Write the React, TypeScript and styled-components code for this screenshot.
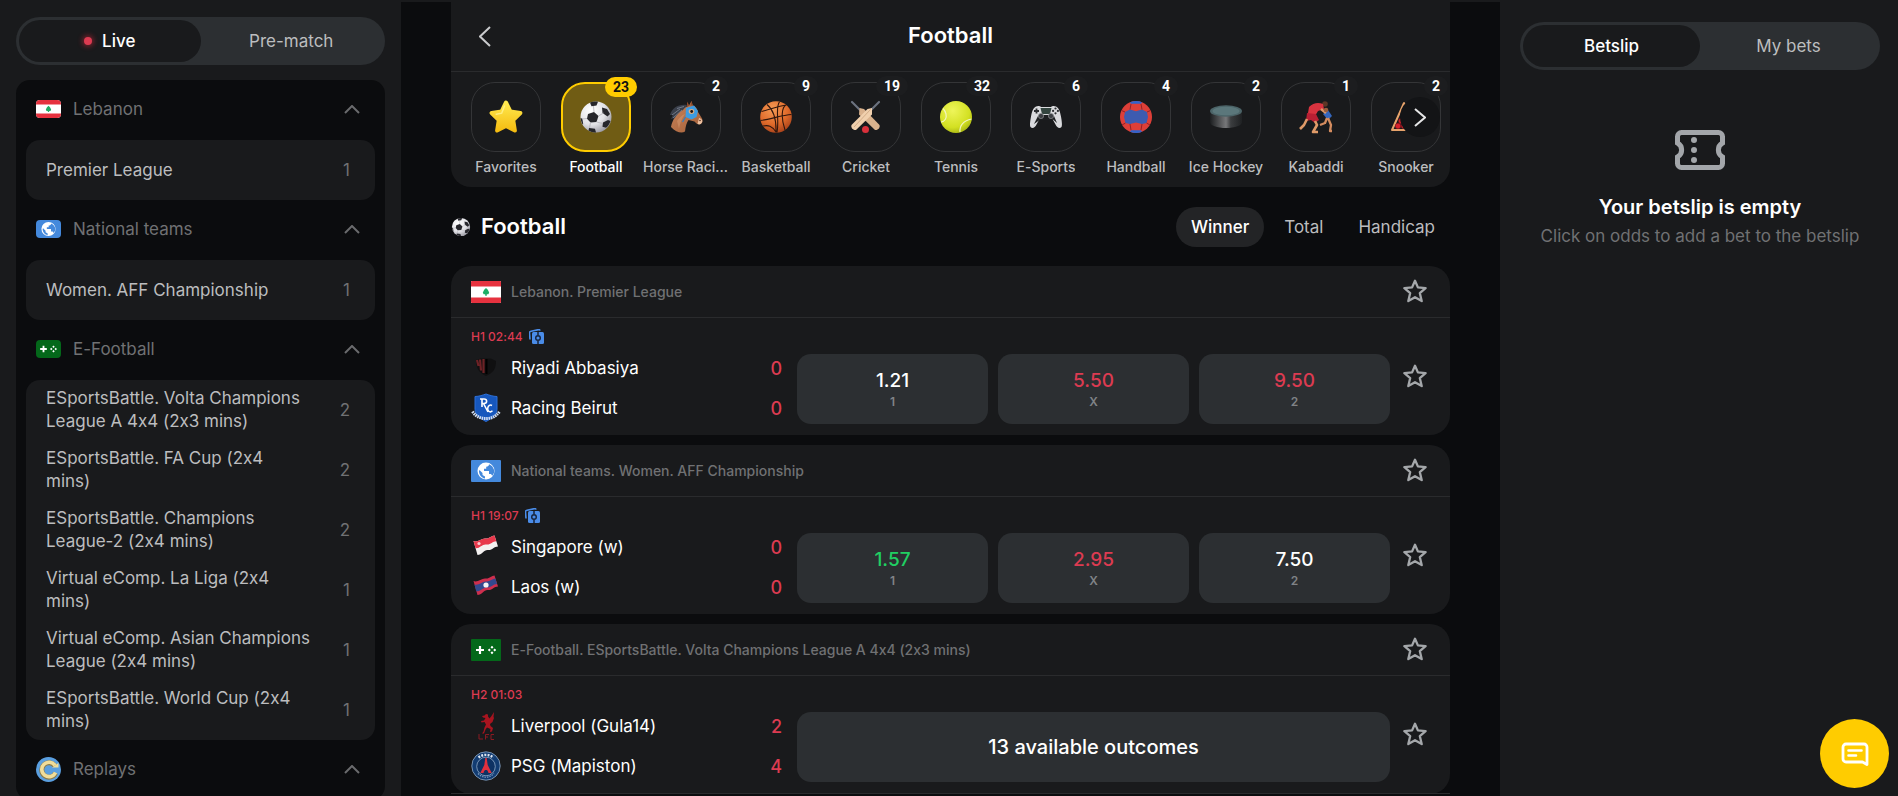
import React from 'react';
import styled, { createGlobalStyle, css } from 'styled-components';

const color = {
  base: '#0b0c0e',
  panel: '#191a1c',
  control: '#2c2f32',
  line: '#2a2b2d',
  text: '#ffffff',
  soft: '#bcbdbf',
  muted: '#707173',
  red: '#dc3b51',
  green: '#20cf62',
  yellow: '#ffcc00',
};

const GlobalStyle = createGlobalStyle`
  *, *::before, *::after { box-sizing: border-box; }
  body {
    margin: 0;
    background: ${color.base};
    color: ${color.text};
    font-family: Inter, "Liberation Sans", sans-serif;
    font-size: 17px;
    line-height: 23px;
    font-variant-ligatures: no-contextual;
  }
  button { font: inherit; font-variant-ligatures: inherit; color: inherit; border: 0; padding: 0; background: none; cursor: pointer; }
  a { color: inherit; text-decoration: none; }
  h1, h2, p, ul { margin: 0; padding: 0; }
  ul { list-style: none; }
  svg { display: block; flex: none; }
`;

/* ---------- page frame ---------- */

const Page = styled.div`
  display: flex;
  height: 100vh;
  overflow: hidden;
  border-top: 2px solid ${color.panel};
`;

const LeftBar = styled.aside`
  flex: 0 0 401px;
  padding: 15px 16px 0;
  background: ${color.panel};
  overflow: hidden;
`;

const Center = styled.main`
  flex: 1;
  min-width: 0;
  padding: 0 50px;
  overflow: hidden;
`;

const RightBar = styled.aside`
  flex: 0 0 398px;
  padding: 20px 18px 0 20px;
  background: ${color.panel};
  overflow: hidden;
`;

/* ---------- segmented switch ---------- */

const Segmented = styled.div`
  display: flex;
  height: 48px;
  padding: 3px;
  border-radius: 24px;
  background: ${color.control};
`;

const Segment = styled.button<{ $active?: boolean }>`
  flex: 1;
  display: flex;
  align-items: center;
  justify-content: center;
  gap: 10px;
  border-radius: 21px;
  color: ${p => (p.$active ? color.text : color.soft)};
  background: ${p => (p.$active ? color.panel : 'transparent')};
  font-weight: ${p => (p.$active ? 500 : 400)};
`;

const LiveDot = styled.span`
  width: 8px;
  height: 8px;
  border-radius: 50%;
  background: ${color.red};
  box-shadow: 0 0 5px 2px rgba(220, 40, 60, 0.45);
`;

/* ---------- league list ---------- */

const LeaguePanel = styled.nav`
  margin-top: 15px;
  padding: 0 10px;
  border-radius: 14px;
  background: ${color.base};
`;

const GroupHead = styled.button`
  display: flex;
  align-items: center;
  gap: 12px;
  width: 100%;
  height: 60px;
  padding: 0 15px 2px 10px;
  color: ${color.muted};
  text-align: left;
`;

const GroupName = styled.span`
  flex: 1;
`;

const LeagueList = styled.ul`
  border-radius: 14px;
  background: ${color.panel};
`;

const LeagueLink = styled.a`
  display: flex;
  align-items: center;
  justify-content: space-between;
  height: 60px;
  padding: 0 25px 0 20px;
  color: ${color.soft};
`;

const LeagueName = styled.span`
  max-width: 266px;
`;

const LeagueCount = styled.span`
  color: ${color.muted};
`;

/* ---------- sports strip ---------- */

const SportsCard = styled.section`
  position: relative;
  border-radius: 0 0 20px 20px;
  background: ${color.panel};
  overflow: hidden;
`;

const TitleBar = styled.header`
  display: grid;
  grid-template-columns: 1fr auto 1fr;
  align-items: center;
  height: 70px;
  padding: 0 28px;
  border-bottom: 1px solid ${color.line};
`;

const Title = styled.h1`
  padding-bottom: 4px;
  font-size: 22px;
  line-height: 28px;
  font-weight: 600;
`;

const SportStrip = styled.div`
  display: flex;
  padding: 10px 0 10px 10px;
`;

const SportButton = styled.button<{ $active?: boolean }>`
  flex: 0 0 90px;
  display: flex;
  flex-direction: column;
  align-items: center;
  gap: 5px;
  color: ${p => (p.$active ? color.text : color.soft)};
`;

const SportTile = styled.span<{ $active?: boolean }>`
  position: relative;
  display: flex;
  align-items: center;
  justify-content: center;
  width: 70px;
  height: 70px;
  border-radius: 24px;
  border: 1px solid #343537;
  ${p =>
    p.$active &&
    css`
      border: 2px solid ${color.yellow};
      background: #705c14;
    `}
`;

const SportBadge = styled.span<{ $active?: boolean }>`
  position: absolute;
  top: -7px;
  right: -8px;
  height: 20px;
  padding: 0 8px;
  border-radius: 10px;
  font: 700 14px/20px Roboto, "Liberation Sans", sans-serif;
  color: ${p => (p.$active ? '#101010' : color.text)};
  background: ${p => (p.$active ? color.yellow : '#1c1d1f')};
`;

const SportLabel = styled.span`
  max-width: 86px;
  height: 20px;
  font-size: 14px;
  line-height: 20px;
  font-weight: 500;
  white-space: nowrap;
  overflow: hidden;
  text-overflow: ellipsis;
`;

const StripNext = styled.button`
  position: absolute;
  top: 95px;
  right: 10px;
  display: flex;
  align-items: center;
  justify-content: center;
  width: 40px;
  height: 40px;
  border-radius: 50%;
  background: #131416;
`;

/* ---------- market heading ---------- */

const SectionHead = styled.div`
  display: flex;
  align-items: center;
  gap: 10px;
  padding: 20px 0 19px;
`;

const SectionTitle = styled.h2`
  flex: 1;
  padding-bottom: 2px;
  font-size: 22px;
  line-height: 28px;
  font-weight: 600;
`;

const Markets = styled.div`
  display: flex;
`;

const MarketTab = styled.button<{ $active?: boolean }>`
  height: 40px;
  padding: 0 15px;
  border-radius: 20px;
  color: ${p => (p.$active ? color.text : color.soft)};
  background: ${p => (p.$active ? '#232426' : 'transparent')};
  font-weight: ${p => (p.$active ? 500 : 400)};
  & + & { margin-left: 5px; }
`;

/* ---------- event cards ---------- */

const EventCard = styled.article`
  margin-bottom: 10px;
  border-radius: 20px;
  background: ${color.panel};
`;

const CardHead = styled.header`
  display: flex;
  align-items: center;
  gap: 10px;
  height: 52px;
  padding: 0 10px 0 20px;
  border-bottom: 1px solid ${color.line};
`;

const CardLeague = styled.a`
  flex: 1;
  padding-bottom: 1px;
  font-size: 14px;
  font-weight: 500;
  color: ${color.muted};
`;

const StarButton = styled.button`
  display: flex;
  align-items: center;
  justify-content: center;
  width: 50px;
  height: 40px;
  padding-bottom: 2px;
`;

const EventRow = styled.div<{ $more?: boolean }>`
  display: flex;
  align-items: center;
  height: 117px;
  padding: 0 10px 0 20px;
  ${p =>
    p.$more &&
    css`
      border-bottom: 1px solid ${color.line};
      height: 118px;
      margin-bottom: 20px;
    `}
`;

const Match = styled.div`
  flex: 0 0 311px;
  margin-right: 15px;
  padding: 10px 0 7px;
`;

const MatchTime = styled.div`
  display: flex;
  align-items: center;
  gap: 6px;
  height: 16px;
  margin-bottom: 4px;
  font-size: 12px;
  font-weight: 500;
  color: ${color.red};
`;

const TeamRow = styled.div`
  display: flex;
  align-items: center;
  gap: 10px;
  height: 40px;
`;

const TeamName = styled.span`
  flex: 1;
`;

const Score = styled.span`
  font-size: 18px;
  font-weight: 500;
  color: ${color.red};
`;

const Odds = styled.div`
  flex: 1;
  display: flex;
  gap: 10px;
  padding: 36px 0 11px;
`;

type Trend = 'up' | 'down' | 'same';
const trendColor: Record<Trend, string> = { up: color.green, down: color.red, same: color.text };

const OddButton = styled.button`
  flex: 1;
  display: flex;
  flex-direction: column;
  align-items: center;
  justify-content: center;
  height: 70px;
  border-radius: 14px;
  background: ${color.control};
`;

const OddValue = styled.span<{ $trend: Trend }>`
  font-size: 19px;
  line-height: 24px;
  font-weight: 500;
  color: ${p => trendColor[p.$trend]};
`;

const OddLabel = styled.span`
  font-size: 12px;
  line-height: 17px;
  font-weight: 600;
  color: #808387;
`;

const Outcomes = styled.span`
  font-size: 20px;
  font-weight: 500;
`;

/* ---------- betslip ---------- */

const EmptySlip = styled.div`
  display: flex;
  flex-direction: column;
  align-items: center;
  padding-top: 60px;
`;

const EmptyTitle = styled.h2`
  margin-top: 23px;
  font-size: 20px;
  line-height: 28px;
  font-weight: 600;
`;

const EmptyText = styled.p`
  margin-top: 4px;
  color: ${color.muted};
  white-space: nowrap;
`;

const ChatButton = styled.button`
  position: fixed;
  right: 9px;
  bottom: 8px;
  display: flex;
  align-items: center;
  justify-content: center;
  width: 69px;
  height: 69px;
  border-radius: 50%;
  background: ${color.yellow};
`;

/* ---------- drawings ---------- */

const HiddenSvg = styled.svg`
  position: absolute;
`;

const GradientDefs = () => (
  <HiddenSvg width="0" height="0" aria-hidden="true">
    <defs>
      <radialGradient id="gBall" cx="35%" cy="30%" r="75%">
        <stop offset="0" stopColor="#ffffff" />
        <stop offset="0.6" stopColor="#e2e2e6" />
        <stop offset="1" stopColor="#9a99a2" />
      </radialGradient>
      <radialGradient id="gBasket" cx="40%" cy="25%" r="80%">
        <stop offset="0" stopColor="#f39a55" />
        <stop offset="0.6" stopColor="#df6a2a" />
        <stop offset="1" stopColor="#a5401a" />
      </radialGradient>
      <radialGradient id="gTennis" cx="40%" cy="30%" r="75%">
        <stop offset="0" stopColor="#eef55a" />
        <stop offset="0.7" stopColor="#d3e022" />
        <stop offset="1" stopColor="#a5b312" />
      </radialGradient>
      <linearGradient id="gStar" x1="0" y1="0" x2="0" y2="1">
        <stop offset="0" stopColor="#ffe94e" />
        <stop offset="1" stopColor="#f5bd12" />
      </linearGradient>
      <linearGradient id="gPuck" x1="0" y1="0" x2="1" y2="0">
        <stop offset="0" stopColor="#1c1e20" />
        <stop offset="0.5" stopColor="#77787a" />
        <stop offset="0.65" stopColor="#3b3d3f" />
        <stop offset="1" stopColor="#1f2123" />
      </linearGradient>
      <linearGradient id="gHorse" x1="0" y1="0" x2="1" y2="1">
        <stop offset="0" stopColor="#c98358" />
        <stop offset="1" stopColor="#a3603a" />
      </linearGradient>
    </defs>
  </HiddenSvg>
);

const Draw = ({ s = 34, children }: { s?: number; children: React.ReactNode }) => (
  <svg width={s} height={s} viewBox="0 0 34 34" fill="none" aria-hidden="true">
    {children}
  </svg>
);

const FavoriteArt = () => (
  <Draw>
    <path
      d="M17 2.500l4.400 9 10 1.500-7.200 7.200 1.700 10.300-8.900-4.600-8.900 4.600 1.700-10.300L2.600 13l10-1.500z"
      fill="url(#gStar)"
      stroke="url(#gStar)"
      strokeWidth="4"
      strokeLinejoin="round"
    />
    <path d="M15.500 6l-2.800 7.200-5.500 1" stroke="#fff6a0" strokeWidth="1.500" strokeLinecap="round" opacity="0.7" />
  </Draw>
);

const FootballArt = ({ s = 34 }: { s?: number }) => (
  <Draw s={s}>
    <circle cx="17" cy="17" r="15.500" fill="url(#gBall)" />
    <path d="M9 14l6-2 4.500 4-2 6-6 .5-3.500-3.800z" fill="#26262b" />
    <path d="M23 7.500l5 1.500 3 5-2.500 2.500-5-3.500z" fill="#26262b" />
    <path d="M11 2.700c3-1.300 6-1.300 8-.9L17.500 5.500l-5 .8z" fill="#26262b" />
    <path d="M1.600 18l1.800.8.8 5.500-.8-.3c-1-1.800-1.700-4-1.800-6z" fill="#26262b" />
    <path d="M24 22.500l5-2.500 2.500 1c-1 3-2.500 5.200-4.500 6.800l-3.500-1z" fill="#26262b" />
    <path d="M10 28l6 .8 1 3.600c-3 .1-5.500-.7-7.500-2z" fill="#26262b" />
    <path d="M15 12l-.5-6M19.500 16l5-3M17.500 22l6.500 1.500M11.500 22.500L10.500 28M8 18.500l-5 .5" stroke="#b2b1b8" strokeWidth="0.800" />
  </Draw>
);

const HorseArt = () => (
  <Draw>
    <path d="M1 15C3 8 9 4 18 5l-3 7-7 8-4 2 1-4-3 1 2-4z" fill="#3a3f4a" />
    <path d="M3 15l8-6M4 18l9-8M8 8.500l7-2" stroke="#767f8e" strokeWidth="0.900" />
    <path
      d="M2 27c1-7 6-13 12-17 2-2.500 4-3.700 6-4.200L22.500 1l1.200 4.500c3 .8 4.300 3 5.300 6.500l4 6.500c1 2 .5 4.500-1.500 5.500-2.500.8-4.500-.5-6-2.500l-6-1.500c-2 3-2.800 6-3.500 11.500-3 2-9 1-14-4.500z"
      fill="url(#gHorse)"
    />
    <path d="M18 1.500l2.500 4.200-2.500 1zM22.500 1l1.200 4.500-2.500.2z" fill="#8d4a2a" />
    <path d="M8 21c2-3 5-6 8-7-3 4-5 9-6 15" fill="#d89a70" opacity="0.5" />
    <path d="M17 8l8-2.500 4 5.500-1.500 6-5 2.500-6-2.500z" fill="#3d9ce2" />
    <ellipse cx="22.500" cy="11.500" rx="2.800" ry="2.400" fill="#e0ad80" />
    <circle cx="22.700" cy="11.500" r="1.400" fill="#1d1512" />
    <path d="M16.500 17l-3 5" stroke="#2f7fc4" strokeWidth="1.300" />
    <path d="M30 18c2.500.5 4 2.500 3 4.500-1 2-3 2.500-4.500 1.500z" fill="#edc0a0" />
    <circle cx="31" cy="20.500" r="0.800" fill="#5b2d1a" />
  </Draw>
);

const BasketballArt = () => (
  <Draw>
    <circle cx="17" cy="17" r="15.800" fill="url(#gBasket)" />
    <path
      d="M1.500 20.500C11 19.500 23 15 32.500 14.500M20.500 1.800C16 8 20.500 20 18 32.500M8 4.500c5 4 9.500 12 9 28M27 5c-4 2-5.500 12-1 25M2.500 11.500C9 10 20 6 27.500 5M4 26c5-1 9-.5 13 6"
      stroke="#30160c"
      strokeWidth="1.100"
    />
  </Draw>
);

const CricketArt = () => (
  <Draw>
    <path d="M3 2l8 8" stroke="#6c7380" strokeWidth="2.200" strokeLinecap="round" />
    <path d="M30 2l-8 8" stroke="#6c7380" strokeWidth="2.200" strokeLinecap="round" />
    <path d="M10.500 8l4.500 1L30.500 25c1 2.500-1.500 5.500-4.500 5L10 14.500z" fill="#d9b28d" />
    <path d="M23 8l-4.500 1L2.500 25c-1 2.500 1.500 5.500 4.500 5l16-15.500z" fill="#f0d0ad" />
    <path d="M21.500 9.500L5 27" stroke="#c9a27c" strokeWidth="0.800" />
    <circle cx="16.500" cy="29.500" r="3.500" fill="#d9303b" />
  </Draw>
);

const TennisArt = () => (
  <Draw>
    <circle cx="17" cy="17" r="16" fill="url(#gTennis)" />
    <path d="M2 22c4-.5 6-4 5-8-.5-2.500-1.500-4-3-5.500M21 32c-.5-6 3-11 11.500-13" stroke="#f2f5c0" strokeWidth="1.200" />
  </Draw>
);

const GamepadArt = () => (
  <Draw>
    <path
      d="M7 6.500c2-1 4-.5 5 .5h10c1-1 3-1.500 5-.5 3 1.500 4 5 5 10 .8 4.500 1.500 9 .5 10.500-2 2-4.500.5-6-2.500L23.500 19h-13L7.500 24.500c-1.500 3-4 4.500-6 2.500-1-1.500-.3-6 .5-10.500 1-5 2-8.500 5-10z"
      fill="#d9dadd"
    />
    <path d="M11.500 8h11l-1.500 6h-8z" fill="#33453f" />
    <path d="M9 16l2.500-1h11l2.500 1 3 7-4-3.500L22 20H12l-2 .5L5 24z" fill="#1e2022" />
    <circle cx="12" cy="16" r="2.600" fill="#3c3f43" stroke="#8e9194" strokeWidth="0.700" />
    <circle cx="22" cy="16" r="2.600" fill="#3c3f43" stroke="#8e9194" strokeWidth="0.700" />
    <path d="M7.500 8.500v5M5 11h5" stroke="#2c2e31" strokeWidth="1.800" />
    <g fill="#2c2e31">
      <circle cx="26.500" cy="8.500" r="1.100" />
      <circle cx="26.500" cy="13.300" r="1.100" />
      <circle cx="24.100" cy="10.900" r="1.100" />
      <circle cx="28.900" cy="10.900" r="1.100" />
    </g>
  </Draw>
);

const HandballArt = () => (
  <Draw>
    <circle cx="17" cy="17" r="16" fill="#dd3f38" />
    <path d="M6 12l5-2.500 6 1.800 6-1.800L28 12l1 5-1.500 6-4.500 1-6-1.500L11 24l-4.500-1L5 17z" fill="#3d5bb0" />
    <path d="M11 2.200c4-1.700 8.500-1.700 12 0L22 3.800H12zM11 31.800c4 1.700 8.500 1.700 12 0L22 30.200H12z" fill="#2f63cc" />
    <path
      d="M12 4L11 9.500M22 4l1 5.500M11 24l1 6M23 24l-1 6M6 12L2.500 10.500M28 12l3.500-1.500M6.500 23l-3.500 2M27.500 23l3.500 2"
      stroke="#8b1f24"
      strokeWidth="0.900"
    />
  </Draw>
);

const PuckArt = () => (
  <Draw>
    <path d="M1 11v11c0 3.500 7 6 16 6s16-2.500 16-6V11z" fill="url(#gPuck)" />
    <ellipse cx="17" cy="11" rx="16" ry="5.800" fill="#4c6468" />
    <ellipse cx="17" cy="11" rx="13.500" ry="4.300" fill="#5b777b" />
  </Draw>
);

const KabaddiArt = () => (
  <Draw>
    <circle cx="26" cy="4" r="2.800" fill="#5c3626" />
    <path d="M24 14l5-4 4 6-4 4z" fill="#3467bd" />
    <path d="M28 18l-2 5-5 2M29 18l3 7-1 6h2" stroke="#d48c5f" strokeWidth="2.300" strokeLinejoin="round" />
    <path d="M10 7c4-4 9-5 14-3l1 5-6 2-3 5-8 3z" fill="#d8333f" />
    <path d="M8 13l9 1 3 6-4 3-4-3-5 1z" fill="#b91f33" />
    <path d="M8 19l-3 6-4 4M16 21l2 4-4 7h5M22 9l5 4" stroke="#df9a68" strokeWidth="2.600" strokeLinejoin="round" />
    <circle cx="27" cy="10" r="2.300" fill="#9a5f3f" />
  </Draw>
);

const SnookerArt = () => (
  <Draw>
    <path d="M15 3L3 30h27z" stroke="#e7a36b" strokeWidth="2" strokeLinejoin="round" />
    <g fill="#d8212c" stroke="#8d0f18" strokeWidth="0.500">
      <circle cx="15" cy="16" r="2.600" />
      <circle cx="12.300" cy="21" r="2.700" />
      <circle cx="17.700" cy="21" r="2.700" />
      <circle cx="9" cy="26" r="2.700" />
      <circle cx="15" cy="26" r="2.700" />
      <circle cx="21" cy="26" r="2.700" />
    </g>
  </Draw>
);

const FlagFrame = styled.svg<{ $r: number }>`
  border-radius: ${p => p.$r}px;
`;

const Flag = ({ kind, small }: { kind: 'lebanon' | 'world' | 'esport'; small?: boolean }) => (
  <FlagFrame
    $r={small ? 4 : 1}
    width={small ? 25 : 30}
    height={small ? 18 : 22}
    viewBox="0 0 30 22"
    preserveAspectRatio="none"
    aria-hidden="true"
  >
    {kind === 'lebanon' && (
      <>
        <path fill="#fff" d="M0 0h30v22H0z" />
        <path fill="#e6323f" d="M0 0h30v5.500H0zM0 16.500h30V22H0z" />
        <path fill="#1fae66" d="M15 7l1.800 1.800 1.400 2.700-.8 1.800h-1.600v1.400h-1.600v-1.400h-1.600l-.8-1.800 1.400-2.700z" />
      </>
    )}
    {kind === 'world' && (
      <>
        <path fill="#4489dc" d="M0 0h30v22H0z" />
        <circle cx="15" cy="11" r="8.500" fill="#fff" />
        <path
          fill="#4489dc"
          d="M8.500 10l3 3v2l2.500 1.500v2C10.500 18 7.800 14.500 8 11zM18 4.200c0 1.800-1 2.300-2.800 2.600v2H13V11h5v3h2l1.200 1.800c2-2.300 2.400-4.300 1.700-6.300-.6-2.300-2.400-4.400-4.900-5.300z"
        />
      </>
    )}
    {kind === 'esport' && (
      <>
        <path fill="#04681a" d="M0 0h30v22H0z" />
        <path stroke="#fff" strokeWidth="2.200" d="M9 7v8M5 11h8" />
        <path
          fill="#fff"
          d="M21 6.800l1.500 1.500-1.500 1.500-1.500-1.500zM21 12.200l1.500 1.500-1.500 1.500-1.500-1.500zM18.300 9.500l1.500 1.500-1.500 1.500-1.500-1.500zM23.700 9.500l1.500 1.500-1.500 1.500-1.500-1.500z"
        />
      </>
    )}
  </FlagFrame>
);

const ReplayIcon = () => (
  <svg width="25" height="25" viewBox="0 0 25 25" fill="none" aria-hidden="true">
    <circle cx="12.500" cy="12.500" r="12.500" fill="#5a9fe0" />
    <path d="M19 9a7.200 7.200 0 1 0 .5 7" stroke="#8a7a4a" strokeWidth="5" />
    <path d="M19 8.500a7.200 7.200 0 1 0 .5 7" stroke="#f0dd9a" strokeWidth="3.600" />
    <path d="M16 10.500h6.500V6z" fill="#f0dd9a" />
  </svg>
);

const Caret = ({ dir, w, h, c = '#c9cacc', sw = 2 }: { dir: 'up' | 'left' | 'right'; w: number; h: number; c?: string; sw?: number }) => {
  const points = {
    up: `1,${h - 1} ${w / 2},1 ${w - 1},${h - 1}`,
    left: `${w - 1},1 1,${h / 2} ${w - 1},${h - 1}`,
    right: `1,1 ${w - 1},${h / 2} 1,${h - 1}`,
  }[dir];
  return (
    <svg width={w} height={h} fill="none" aria-hidden="true">
      <polyline points={points} stroke={c} strokeWidth={sw} />
    </svg>
  );
};

const StarOutline = () => (
  <svg width="24" height="24" viewBox="0 0 24 24" fill="none" aria-hidden="true">
    <path
      d="M12 1.700l2.900 6.700 7.700.7-5.800 5 1.900 8L12 18.200l-6.700 3.900 1.900-8-5.800-5 7.700-.7z"
      stroke="#a4a7aa"
      strokeWidth="2.300"
      strokeLinejoin="round"
    />
  </svg>
);

const CardsIcon = () => (
  <svg width="15" height="15" viewBox="0 0 15 15" fill="none" aria-hidden="true">
    <path d="M1 10.500L.5 4C.4 3 1 2.400 2 2.200L9.500.6c.8-.1 1.300.3 1.500 1" stroke="#4a8ce8" strokeWidth="1.600" />
    <rect x="3" y="3" width="12" height="12" rx="1.500" fill="#4a8ce8" />
    <path d="M9 3v3M9 12v3" stroke="#16233c" strokeWidth="1.500" />
    <circle cx="9" cy="9" r="2.300" stroke="#16233c" strokeWidth="1.400" />
  </svg>
);

const TicketIcon = () => (
  <svg width="50" height="40" viewBox="0 0 50 40" fill="none" aria-hidden="true">
    <path
      d="M2.500 6.500a4 4 0 0 1 4-4h37a4 4 0 0 1 4 4V13a8 8 0 0 0 0 14v6.500a4 4 0 0 1-4 4h-37a4 4 0 0 1-4-4V27a8 8 0 0 0 0-14z"
      stroke="#a3a6aa"
      strokeWidth="5"
    />
    <g fill="#a3a6aa">
      <circle cx="19" cy="10" r="3" />
      <circle cx="19" cy="20" r="3" />
      <circle cx="19" cy="30" r="3" />
    </g>
  </svg>
);

const ChatIcon = () => (
  <svg width="28" height="24" viewBox="0 0 28 24" fill="none" stroke="#fff" strokeLinecap="round" strokeLinejoin="round" aria-hidden="true">
    <path d="M5 2h18a3 3 0 0 1 3 3v17.500L21.500 20H5a3 3 0 0 1-3-3V5a3 3 0 0 1 3-3z" strokeWidth="2.800" />
    <path d="M7.500 8.500h13M7.500 13.500h7.500" strokeWidth="2.600" />
  </svg>
);

const Crest = ({ kind }: { kind: string }) => (
  <svg width="30" height="30" viewBox="0 0 30 30" fill="none" aria-hidden="true">
    {kind === 'riyadi' && (
      <>
        <path d="M5 7l5-1.500h10L25 8c0 8-3 12-10 15C8 20 5 15 5 7z" fill="#101011" />
        <path d="M6 7l1.500 6M9 6.500l1 11M12.500 6v14" stroke="#6d2226" strokeWidth="2.200" />
        <path d="M15.500 6v15" stroke="#000" strokeWidth="2" />
      </>
    )}
    {kind === 'racing' && (
      <>
        <path d="M4 3.500C8 3.500 12 2 15 1c3 1 7 2.500 11 2.500v13c0 5-5 9-11 12C9 25.500 4 21.500 4 16.500z" fill="#1657bd" stroke="#2d6fd6" strokeWidth="1" />
        <path d="M9 6h4c3.500 0 3.500 4.500 0 4.500h-2.500M11 6v8M12.500 10.500L17 19" stroke="#fff" strokeWidth="1.600" />
        <path d="M21 12.500c-4-2.500-6.500 5.500-1.500 6.500l2-1.200" stroke="#fff" strokeWidth="1.500" />
        <path d="M1.500 18.500c4 6 9 7 13.500 7s9.500-1 13.500-7" stroke="#cfdcf2" strokeWidth="3" strokeDasharray="1.600 0.700" />
      </>
    )}
    {kind === 'singapore' && (
      <>
        <path d="M2.500 9c4 2 8-3 12-2.500s6-3 9-3L27 14.500c-4 0-6 4-10 3.500s-6 5-10.500 5z" fill="#f4f1f1" />
        <path d="M2.500 9c4 2 8-3 12-2.500s6-3 9-3l1.800 5.800c-4 0-6 4-10 3.200s-7 4.500-10.800 3.500z" fill="#e8394c" />
        <circle cx="8" cy="11.500" r="1.600" fill="#f7c6cc" />
      </>
    )}
    {kind === 'laos' && (
      <>
        <path d="M2.500 9c4 2 8-3 12-2.500s6-3 9-3L27 14.500c-4 0-6 4-10 3.500s-6 5-10.500 5z" fill="#ce2f4e" />
        <path d="M3.500 12.500c4 1.500 8-3.500 11.500-3s6.500-3 9.500-3l1.500 5.500c-4 0-6 4-9.500 3.300s-7 4.500-11.300 4z" fill="#33498f" />
        <circle cx="15" cy="13" r="2.600" fill="#f3f3f6" />
      </>
    )}
    {kind === 'liverpool' && (
      <>
        <path
          d="M15 3l2 .5v2l1.500 2 2-2.500L23 1l-.5 5 .5 1-1.500 4-2.500 2 .5 2 2.500 2-1 3.500-2 .5.500-3-3.500-1.500-1.500 2-1.500 4H11l1.500-2 1-4 1.500-3-1.500-2.500-3 .5-.5-1.500 3-.5 1.500-2.500-2.500-.5-1-1.500 2.500-.5z"
          fill="#a8141f"
        />
        <path d="M8 23v5h4M14.500 28.500V23.500h3.500M14.500 26h2.500M23 23.500h-3v5h3" stroke="#8a1a22" strokeWidth="1" />
      </>
    )}
    {kind === 'psg' && (
      <>
        <circle cx="15" cy="15" r="14.200" fill="#123c72" stroke="#8fa9c7" strokeWidth="0.800" />
        <circle cx="15" cy="15.500" r="9.300" fill="#0e3263" stroke="#8fa9c7" strokeWidth="0.800" />
        <path d="M14.300 7h1.400l1 7 4 8h-3.200c-.6-2.500-1.400-3-2.500-3s-1.900.5-2.500 3H9.300l4-8z" fill="#e0303e" />
        <path d="M7.500 6.500C12 3 18 3 22.500 6.500" stroke="#dfe7f0" strokeWidth="2.400" strokeDasharray="2 1.200" />
        <path d="M7 22.500c4.500 5 11.500 5 16 0" stroke="#7f9cc0" strokeWidth="1.200" strokeDasharray="1.500 1" />
      </>
    )}
  </svg>
);

/* ---------- data ---------- */

type FlagKind = 'lebanon' | 'world' | 'esport';

const groups: { name: string; flag?: FlagKind; leagues: [string, number][] }[] = [
  { name: 'Lebanon', flag: 'lebanon', leagues: [['Premier League', 1]] },
  { name: 'National teams', flag: 'world', leagues: [['Women. AFF Championship', 1]] },
  {
    name: 'E-Football',
    flag: 'esport',
    leagues: [
      ['ESportsBattle. Volta Champions League A 4x4 (2x3 mins)', 2],
      ['ESportsBattle. FA Cup (2x4 mins)', 2],
      ['ESportsBattle. Champions League-2 (2x4 mins)', 2],
      ['Virtual eComp. La Liga (2x4 mins)', 1],
      ['Virtual eComp. Asian Champions League (2x4 mins)', 1],
      ['ESportsBattle. World Cup (2x4 mins)', 1],
    ],
  },
  { name: 'Replays', leagues: [] },
];

const sports: { name: string; count?: number; art: React.ReactNode }[] = [
  { name: 'Favorites', art: <FavoriteArt /> },
  { name: 'Football', count: 23, art: <FootballArt /> },
  { name: 'Horse Racing', count: 2, art: <HorseArt /> },
  { name: 'Basketball', count: 9, art: <BasketballArt /> },
  { name: 'Cricket', count: 19, art: <CricketArt /> },
  { name: 'Tennis', count: 32, art: <TennisArt /> },
  { name: 'E-Sports', count: 6, art: <GamepadArt /> },
  { name: 'Handball', count: 4, art: <HandballArt /> },
  { name: 'Ice Hockey', count: 2, art: <PuckArt /> },
  { name: 'Kabaddi', count: 1, art: <KabaddiArt /> },
  { name: 'Snooker', count: 2, art: <SnookerArt /> },
];

type Odd = { value: string; label: string; trend: Trend };

const events: {
  flag: FlagKind;
  league: string;
  time: string;
  cards?: boolean;
  more?: boolean;
  teams: [string, string, number][];
  odds?: Odd[];
  outcomes?: string;
}[] = [
  {
    flag: 'lebanon',
    league: 'Lebanon. Premier League',
    time: 'H1 02:44',
    cards: true,
    teams: [['riyadi', 'Riyadi Abbasiya', 0], ['racing', 'Racing Beirut', 0]],
    odds: [
      { value: '1.21', label: '1', trend: 'same' },
      { value: '5.50', label: 'X', trend: 'down' },
      { value: '9.50', label: '2', trend: 'down' },
    ],
  },
  {
    flag: 'world',
    league: 'National teams. Women. AFF Championship',
    time: 'H1 19:07',
    cards: true,
    teams: [['singapore', 'Singapore (w)', 0], ['laos', 'Laos (w)', 0]],
    odds: [
      { value: '1.57', label: '1', trend: 'up' },
      { value: '2.95', label: 'X', trend: 'down' },
      { value: '7.50', label: '2', trend: 'same' },
    ],
  },
  {
    flag: 'esport',
    league: 'E-Football. ESportsBattle. Volta Champions League A 4x4 (2x3 mins)',
    time: 'H2 01:03',
    more: true,
    teams: [['liverpool', 'Liverpool (Gula14)', 2], ['psg', 'PSG (Mapiston)', 4]],
    outcomes: '13 available outcomes',
  },
];

/* ---------- app ---------- */

export default function App() {
  return (
    <>
      <GlobalStyle />
      <GradientDefs />
      <Page>
        <LeftBar>
          <Segmented>
            <Segment $active>
              <LiveDot />
              Live
            </Segment>
            <Segment>Pre-match</Segment>
          </Segmented>
          <LeaguePanel>
            {groups.map(g => (
              <div key={g.name}>
                <GroupHead>
                  {g.flag ? <Flag kind={g.flag} small /> : <ReplayIcon />}
                  <GroupName>{g.name}</GroupName>
                  <Caret dir="up" w={16} h={9} c="#6a6b6d" />
                </GroupHead>
                <LeagueList>
                  {g.leagues.map(([name, count]) => (
                    <li key={name}>
                      <LeagueLink href="#">
                        <LeagueName>{name}</LeagueName>
                        <LeagueCount>{count}</LeagueCount>
                      </LeagueLink>
                    </li>
                  ))}
                </LeagueList>
              </div>
            ))}
          </LeaguePanel>
        </LeftBar>

        <Center>
          <SportsCard>
            <TitleBar>
              <button aria-label="Back">
                <Caret dir="left" w={12} h={21} />
              </button>
              <Title>Football</Title>
            </TitleBar>
            <SportStrip>
              {sports.map(s => {
                const active = s.name === 'Football';
                return (
                  <SportButton key={s.name} $active={active}>
                    <SportTile $active={active}>
                      {s.art}
                      {s.count !== undefined && <SportBadge $active={active}>{s.count}</SportBadge>}
                    </SportTile>
                    <SportLabel>{s.name}</SportLabel>
                  </SportButton>
                );
              })}
            </SportStrip>
            <StripNext aria-label="Next sports">
              <Caret dir="right" w={12} h={19} c="#e6e6e7" />
            </StripNext>
          </SportsCard>

          <SectionHead>
            <FootballArt s={20} />
            <SectionTitle>Football</SectionTitle>
            <Markets>
              <MarketTab $active>Winner</MarketTab>
              <MarketTab>Total</MarketTab>
              <MarketTab>Handicap</MarketTab>
            </Markets>
          </SectionHead>

          {events.map(e => (
            <EventCard key={e.league}>
              <CardHead>
                <Flag kind={e.flag} />
                <CardLeague href="#">{e.league}</CardLeague>
                <StarButton aria-label="Add league to favorites">
                  <StarOutline />
                </StarButton>
              </CardHead>
              <EventRow $more={e.more}>
                <Match>
                  <MatchTime>
                    {e.time}
                    {e.cards && <CardsIcon />}
                  </MatchTime>
                  {e.teams.map(([crest, name, score]) => (
                    <TeamRow key={name}>
                      <Crest kind={crest} />
                      <TeamName>{name}</TeamName>
                      <Score>{score}</Score>
                    </TeamRow>
                  ))}
                </Match>
                <Odds>
                  {e.odds?.map(o => (
                    <OddButton key={o.label}>
                      <OddValue $trend={o.trend}>{o.value}</OddValue>
                      <OddLabel>{o.label}</OddLabel>
                    </OddButton>
                  ))}
                  {e.outcomes && (
                    <OddButton>
                      <Outcomes>{e.outcomes}</Outcomes>
                    </OddButton>
                  )}
                </Odds>
                <StarButton aria-label="Add match to favorites">
                  <StarOutline />
                </StarButton>
              </EventRow>
            </EventCard>
          ))}
        </Center>

        <RightBar>
          <Segmented>
            <Segment $active>Betslip</Segment>
            <Segment>My bets</Segment>
          </Segmented>
          <EmptySlip>
            <TicketIcon />
            <EmptyTitle>Your betslip is empty</EmptyTitle>
            <EmptyText>Click on odds to add a bet to the betslip</EmptyText>
          </EmptySlip>
        </RightBar>
      </Page>
      <ChatButton aria-label="Open chat">
        <ChatIcon />
      </ChatButton>
    </>
  );
}
